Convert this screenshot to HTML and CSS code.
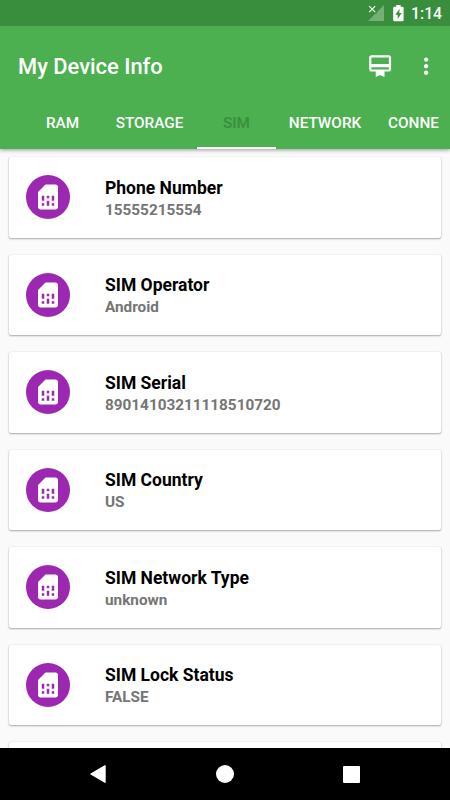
FILE: index.html
```
<!DOCTYPE html>
<html lang="en">
<head>
  <meta charset="UTF-8">
  <meta name="viewport" content="width=device-width, initial-scale=1.0">
  <title>My Device Info</title>
  <link rel="stylesheet" href="styles.css">
</head>
<body>
  <svg class="defs" width="0" height="0">
    <symbol id="sim" viewBox="0 0 24 24">
      <path d="M19.99 4c0-1.1-.89-2-1.99-2h-8L4 8v12c0 1.1.9 2 2 2h12.01c1.1 0 1.99-.9 1.99-2l-.01-16zM9 19H7v-2h2v2zm8 0h-2v-2h2v2zm-8-4H7v-4h2v4zm4 4h-2v-4h2v4zm0-6h-2v-2h2v2zm4 2h-2v-4h2v4z"/>
    </symbol>
  </svg>

  <header class="header">
    <div class="status-bar">
      <svg class="signal" width="17" height="17" viewBox="0 0 17 17">
        <path d="M16 0v16H0l6-6 4-4z" fill="#fff" fill-opacity=".3"/>
        <path d="M.3 0h8.4v8.6H.3z" fill="#388e3c"/>
        <path d="M1.2 1.2l6 6M7.2 1.2l-6 6" stroke="#fff" stroke-width="1.2"/>
      </svg>
      <svg class="battery" width="11" height="17" viewBox="0 0 11 17">
        <path d="M3.2 0h4.4v1.7h2q1 0 1 1v12.6q0 1-1 1H1.2q-1 0-1-1V2.7q0-1 1-1h2z" fill="#fff"/>
        <path d="M6.7 3.7L2.3 9.7h2.4v4.4l4-6H6.2z" fill="#388e3c"/>
      </svg>
      <span class="clock">1:14</span>
    </div>
    <div class="toolbar">
      <h1>My Device Info</h1>
      <svg class="card-icon" width="26.25" height="26.25" viewBox="0 0 24 24" fill="#fff">
        <path d="M20 2H4c-1.11 0-2 .89-2 2v11c0 1.11.89 2 2 2h4v5l4-2 4 2v-5h4c1.11 0 2-.89 2-2V4c0-1.11-.89-2-2-2zm0 13H4v-2h16v2zm0-5H4V4h16v6z"/>
      </svg>
      <svg class="more-icon" width="26.25" height="26.25" viewBox="0 0 24 24" fill="#fff">
        <path d="M12 8c1.1 0 2-.9 2-2s-.9-2-2-2-2 .9-2 2 .9 2 2 2zm0 2c-1.1 0-2 .9-2 2s.9 2 2 2 2-.9 2-2-.9-2-2-2zm0 6c-1.1 0-2 .9-2 2s.9 2 2 2 2-.9 2-2-.9-2-2-2z"/>
      </svg>
    </div>
    <nav class="tabs">
      <span class="tab ram">RAM</span>
      <span class="tab storage">STORAGE</span>
      <span class="tab sim active">SIM</span>
      <span class="tab network">NETWORK</span>
      <span class="tab conne">CONNE</span>
    </nav>
  </header>

  <main class="list">
    <div class="card">
      <div class="badge"><svg><use href="#sim"/></svg></div>
      <div class="info"><h2>Phone Number</h2><p>15555215554</p></div>
    </div>
    <div class="card">
      <div class="badge"><svg><use href="#sim"/></svg></div>
      <div class="info"><h2>SIM Operator</h2><p>Android</p></div>
    </div>
    <div class="card">
      <div class="badge"><svg><use href="#sim"/></svg></div>
      <div class="info"><h2>SIM Serial</h2><p>89014103211118510720</p></div>
    </div>
    <div class="card">
      <div class="badge"><svg><use href="#sim"/></svg></div>
      <div class="info"><h2>SIM Country</h2><p>US</p></div>
    </div>
    <div class="card">
      <div class="badge"><svg><use href="#sim"/></svg></div>
      <div class="info"><h2>SIM Network Type</h2><p>unknown</p></div>
    </div>
    <div class="card">
      <div class="badge"><svg><use href="#sim"/></svg></div>
      <div class="info"><h2>SIM Lock Status</h2><p>FALSE</p></div>
    </div>
    <div class="card"></div>
  </main>

  <footer class="nav-bar">
    <svg width="16" height="18" viewBox="0 0 16 18"><path d="M15 .8v16.4L1 9z" fill="#fff" stroke="#fff" stroke-width="1.4" stroke-linejoin="round"/></svg>
    <svg width="18" height="18" viewBox="0 0 18 18"><circle cx="9" cy="9" r="9" fill="#fff"/></svg>
    <svg width="17" height="17" viewBox="0 0 17 17"><rect width="17" height="17" rx="1" fill="#fff"/></svg>
  </footer>
</body>
</html>
```
FILE: styles.css
```
* {
  box-sizing: border-box;
}
body {
  margin: 0;
  width: 450px;
  height: 800px;
  overflow: hidden;
  display: flex;
  flex-direction: column;
  background-color: #fafafa;
  font-family: Roboto, sans-serif;
}
h1, h2, p {
  margin: 0;
}
svg {
  display: block;
  flex: none;
}
.defs {
  position: absolute;
}

.header {
  flex: none;
  height: 149px;
  background-color: #4caf50;
  color: #fff;
  box-shadow: 0 1px 4px rgba(0, 0, 0, 0.4);
  z-index: 1;
}
.status-bar {
  height: 26px;
  padding-right: 8px;
  display: flex;
  align-items: center;
  justify-content: flex-end;
  background-color: #388e3c;
}
.battery {
  margin: 0 7.5px;
}
.clock {
  width: 31px;
  font-size: 15.8px;
  font-weight: 500;
  line-height: 26px;
  white-space: nowrap;
  padding-top: 2px;
}
.toolbar {
  height: 70px;
  padding: 10px 11px 0 18px;
  display: flex;
  align-items: center;
}
.toolbar h1 {
  flex: 1;
  padding-top: 2px;
  font-size: 21.9px;
  font-weight: 500;
  line-height: 26px;
}
.card-icon {
  margin-right: 20px;
}
.tabs {
  height: 53px;
  padding-left: 23px;
  display: flex;
  overflow: hidden;
}
.tab {
  flex: none;
  border-bottom: 2px solid transparent;
  font-size: 15.3px;
  font-weight: 500;
  line-height: 54px;
  text-align: center;
}
.ram, .sim {
  width: 79px;
}
.storage {
  width: 95px;
}
.network {
  width: 98px;
}
.conne {
  width: 79px;
}
.active {
  color: #388e3c;
  border-color: #fff;
}

.list {
  flex: 1;
  min-height: 0;
  overflow: hidden;
  padding: 8.4px 9px 0;
}
.card {
  height: 80.5px;
  margin-bottom: 17px;
  padding-left: 17px;
  display: flex;
  align-items: center;
  background-color: #fff;
  border-radius: 2px;
  box-shadow: 0 1px 2px rgba(0, 0, 0, 0.32), 0 0 1px rgba(0, 0, 0, 0.2);
}
.badge {
  width: 44px;
  height: 44px;
  margin: 0 35px 1px 0;
  border-radius: 50%;
  background-color: #9c27b0;
  display: flex;
  align-items: center;
  justify-content: center;
}
.badge svg {
  width: 30px;
  height: 30px;
  fill: #fff;
}
.info {
  padding-top: 3px;
}
.info h2 {
  font-size: 17.5px;
  font-weight: 700;
  line-height: 23px;
  color: #000;
}
.info p {
  font-size: 15.3px;
  font-weight: 700;
  line-height: 21.5px;
  color: #757575;
}

.nav-bar {
  flex: none;
  height: 52px;
  padding: 0 90px;
  display: flex;
  align-items: center;
  justify-content: space-between;
  background-color: #000;
}
```
